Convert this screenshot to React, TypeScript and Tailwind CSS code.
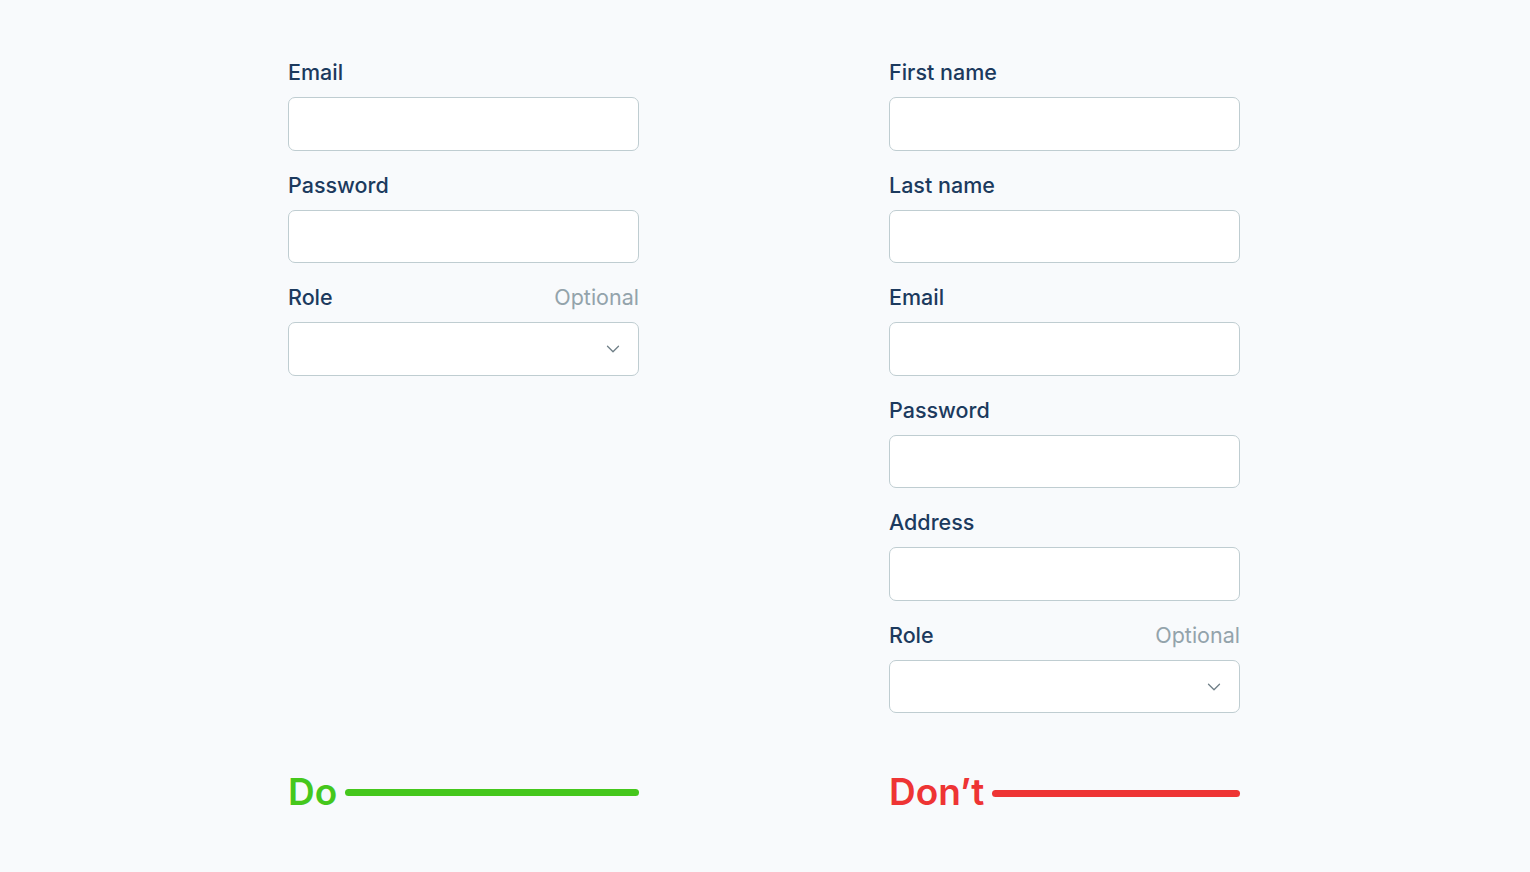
import { ChevronDown } from 'lucide-react'

const font = { fontFamily: 'Inter, "Noto Sans", sans-serif' }

function Field({ label, optional, select }: { label: string; optional?: boolean; select?: boolean }) {
  return (
    <div className="flex flex-col">
      <div className="flex items-center justify-between h-6 leading-6">
        <span className="text-[21.5px] font-medium text-[#1c3a5e]">{label}</span>
        {optional && <span className="text-[21.5px] text-[#93a3ab]">Optional</span>}
      </div>
      <div className="mt-[13px] h-[53.5px] w-full rounded-[7px] border-[1.5px] border-[#bfcdd1] bg-white flex items-center justify-end pr-[14px]">
        {select && <ChevronDown className="h-[22px] w-[22px] text-[#6f7f87]" strokeWidth={1.4} />}
      </div>
    </div>
  )
}

function Verdict({ label, color }: { label: string; color: 'green' | 'red' }) {
  return (
    <div className="flex items-center gap-[8px]">
      <span
        className={
          color === 'green'
            ? 'text-[37px] font-semibold leading-none text-[#45c71c]'
            : 'text-[37px] font-semibold leading-none text-[#ee3434]'
        }
      >
        {label}
      </span>
      <div
        className={
          color === 'green'
            ? 'flex-1 h-[7px] rounded-full bg-[#45c71c] mt-[1px]'
            : 'flex-1 h-[7px] rounded-full bg-[#ee3434] mt-[3px]'
        }
      />
    </div>
  )
}

export default function App() {
  return (
    <div className="w-[1530px] h-[872px] bg-[#f8fafc] flex gap-[250px] pl-[288px] pt-[60px]" style={font}>
      <div className="w-[351px] flex flex-col">
        <div className="flex flex-col gap-[22.1px]">
          <Field label="Email" />
          <Field label="Password" />
          <Field label="Role" optional select />
        </div>
        <div className="mt-auto mb-[62px]">
          <Verdict label="Do" color="green" />
        </div>
      </div>
      <div className="w-[351px] flex flex-col">
        <div className="flex flex-col gap-[22.1px]">
          <Field label="First name" />
          <Field label="Last name" />
          <Field label="Email" />
          <Field label="Password" />
          <Field label="Address" />
          <Field label="Role" optional select />
        </div>
        <div className="mt-auto mb-[62px]">
          <Verdict label="Don’t" color="red" />
        </div>
      </div>
    </div>
  )
}
